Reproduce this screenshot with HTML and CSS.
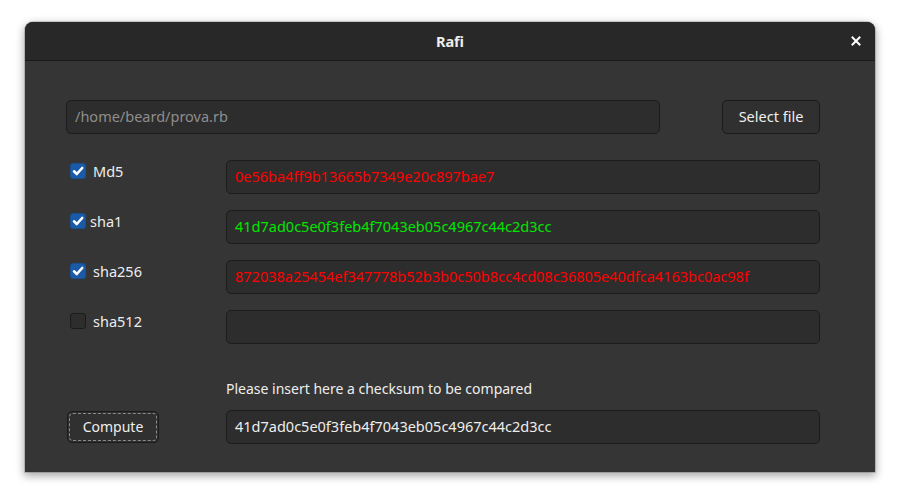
FILE: index.html
```html
<!DOCTYPE html>
<html>
<head>
<meta charset="utf-8">
<link rel="stylesheet" href="styles.css">
</head>
<body>
<div class="window">
  <div class="titlebar">
    <span class="title">Rafi</span>
    <span class="close">
      <svg width="10" height="10" viewBox="0 0 10 10"><path d="M1.5 1.5 L8.5 8.5 M8.5 1.5 L1.5 8.5" stroke="#ffffff" stroke-width="2" stroke-linecap="square"/></svg>
    </span>
  </div>
  <div class="content">
    <div class="file-row">
      <div class="entry path">/home/beard/prova.rb</div>
      <button class="btn select">Select file</button>
    </div>
    <div class="hash-grid">
      <label class="check"><span class="box on"><svg width="14" height="14" viewBox="0 0 14 14"><path d="M3 7.3 L5.8 10 L11.2 4" fill="none" stroke="#fff" stroke-width="2.6" stroke-linecap="round" stroke-linejoin="round"/></svg></span><span class="lbl">Md5</span></label>
      <div class="entry red">0e56ba4ff9b13665b7349e20c897bae7</div>
      <label class="check"><span class="box on"><svg width="14" height="14" viewBox="0 0 14 14"><path d="M3 7.3 L5.8 10 L11.2 4" fill="none" stroke="#fff" stroke-width="2.6" stroke-linecap="round" stroke-linejoin="round"/></svg></span><span class="lbl tight">sha1</span></label>
      <div class="entry green">41d7ad0c5e0f3feb4f7043eb05c4967c44c2d3cc</div>
      <label class="check"><span class="box on"><svg width="14" height="14" viewBox="0 0 14 14"><path d="M3 7.3 L5.8 10 L11.2 4" fill="none" stroke="#fff" stroke-width="2.6" stroke-linecap="round" stroke-linejoin="round"/></svg></span><span class="lbl">sha256</span></label>
      <div class="entry red">872038a25454ef347778b52b3b0c50b8cc4cd08c36805e40dfca4163bc0ac98f</div>
      <label class="check"><span class="box"></span><span class="lbl">sha512</span></label>
      <div class="entry"></div>
    </div>
    <div class="compare">
      <div class="spacer"></div>
      <div class="hint">Please insert here a checksum to be compared</div>
      <div class="btn-cell"><button class="btn compute"><span class="focus">Compute</span></button></div>
      <div class="entry white">41d7ad0c5e0f3feb4f7043eb05c4967c44c2d3cc</div>
    </div>
  </div>
</div>
</body>
</html>
```

FILE: styles.css
```css
html, body {
  margin: 0;
  padding: 0;
  background: #ffffff;
}
body {
  width: 900px;
  height: 500px;
  overflow: hidden;
  font-family: "Noto Sans", "Open Sans", sans-serif;
  font-size: 14px;
}
.window {
  margin: 22px 0 0 25px;
  width: 850px;
  height: 450px;
  background: #353535;
  border-radius: 8px 8px 0 0;
  box-shadow: 0 3px 9px 1px rgba(0,0,0,0.35), 0 0 0 1px rgba(0,0,0,0.15);
  display: flex;
  flex-direction: column;
  overflow: hidden;
}
.titlebar {
  height: 38px;
  background: #282828;
  border-bottom: 1px solid #1b1b1b;
  position: relative;
  display: flex;
  align-items: center;
  justify-content: center;
  flex: none;
}
.title {
  color: #eeeeec;
  font-weight: bold;
  font-size: 14.5px;
}
.close {
  position: absolute;
  right: 14px;
  top: 14px;
  width: 10px;
  height: 10px;
  display: flex;
}
.content {
  padding: 39px 55px 0 41px;
  color: #eeeeec;
}
.file-row {
  display: flex;
  align-items: center;
  justify-content: space-between;
}
.entry {
  box-sizing: border-box;
  height: 34px;
  background: #2d2d2d;
  border: 1px solid #1c1c1c;
  border-radius: 5px;
  padding: 0 8px 2px;
  display: flex;
  align-items: center;
  white-space: nowrap;
  overflow: hidden;
  font-size: 14.5px;
}
.path {
  width: 594px;
  color: #8e8e8c;
}
.btn {
  box-sizing: border-box;
  font-family: inherit;
  font-size: 14px;
  color: #eeeeec;
  background: #303030;
  border: 1px solid #1b1b1b;
  border-radius: 5px;
  padding: 0;
}
.select {
  width: 98px;
  height: 34px;
  padding-bottom: 2px;
  font-size: 14.5px;
}
.hash-grid {
  margin-top: 26px;
  display: grid;
  grid-template-columns: 160px 594px;
  grid-auto-rows: 34px;
  row-gap: 16px;
}
.check {
  display: flex;
  align-items: center;
  height: 16px;
  margin-top: 3px;
  padding-left: 4px;
  font-size: 14.5px;
}
.box {
  box-sizing: border-box;
  width: 16px;
  height: 16px;
  border-radius: 3px;
  border: 1px solid #1b1b1b;
  background: #2d2d2d;
  display: flex;
  align-items: center;
  justify-content: center;
}
.box.on {
  background: #1a5aa6;
  border-color: #174f92;
}
.lbl {
  margin-left: 7px;
}
.lbl.tight {
  margin-left: 4px;
}
.red { color: #ff0000; }
.green { color: #00e600; }
.white { color: #eeeeec; }
.compare {
  margin-top: 37px;
  display: grid;
  grid-template-columns: 160px 594px;
  grid-template-rows: 19px 34px;
  row-gap: 10px;
}
.hint {
  line-height: 16px;
  color: #eeeeec;
}
.btn-cell {
  display: flex;
  align-items: center;
}
.compute {
  width: 92px;
  height: 32px;
  margin-left: 1px;
  padding: 1px;
  display: flex;
}
.focus {
  flex: 1;
  border: 1px dashed #8a8a8a;
  border-radius: 4px;
  display: flex;
  align-items: center;
  justify-content: center;
  padding-bottom: 1px;
}
```
